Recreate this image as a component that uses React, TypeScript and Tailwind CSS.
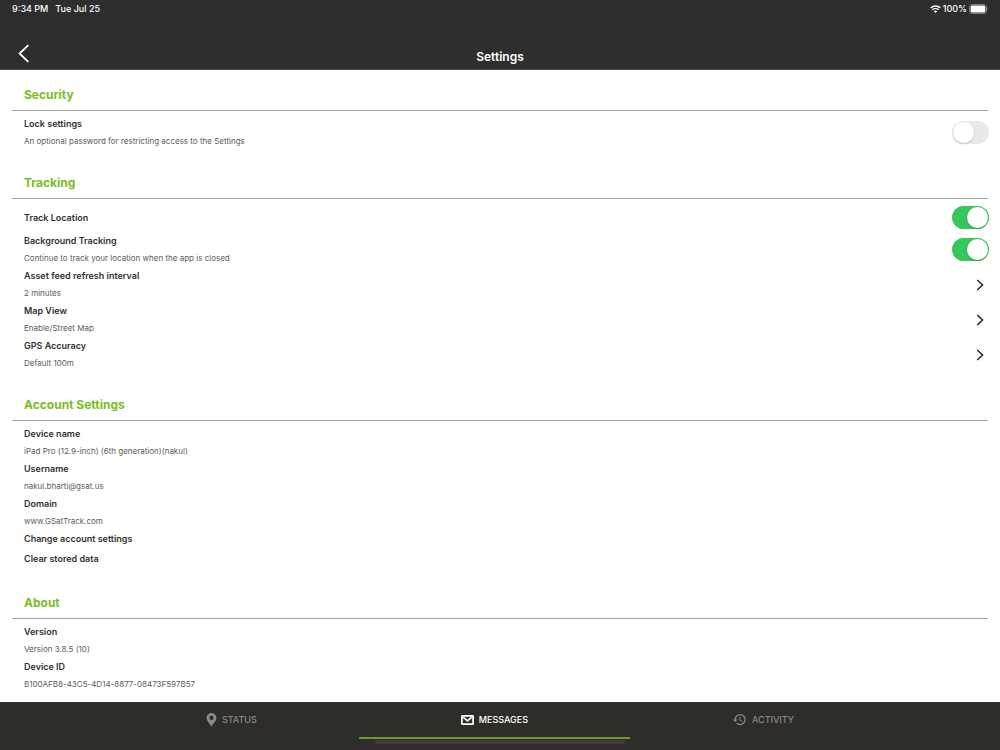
import { useState, type ReactNode } from "react";
import { FaMapMarkerAlt } from "react-icons/fa";
import { MdHistory } from "react-icons/md";

interface RowTextProps {
    title: string;
    detail?: string;
}

function RowText({ title, detail }: RowTextProps) {
    return (
        <span className="flex flex-col gap-px">
            <span className="text-[9px] leading-4 font-semibold text-[#303030]">
                {title}
            </span>
            {detail && (
                <span className="text-[8px] leading-4 text-[#5c5c5c]">
                    {detail}
                </span>
            )}
        </span>
    );
}

function InfoRow({ title, detail }: RowTextProps) {
    return (
        <div className="py-px px-6">
            <RowText title={title} detail={detail} />
        </div>
    );
}

function ActionRow({ title }: { title: string }) {
    return (
        <button className="flex w-full h-5 pt-px px-6 text-left">
            <RowText title={title} />
        </button>
    );
}

function LinkRow({ title, detail }: RowTextProps) {
    return (
        <button className="w-full flex items-center justify-between py-px pl-6 pr-4 text-left">
            <RowText title={title} detail={detail} />
            <svg
                width="8"
                height="12"
                viewBox="0 0 8 12"
                fill="none"
                stroke="#1c1c1c"
                strokeWidth="1.4"
                aria-hidden="true"
            >
                <path d="M1.2 1 L6.6 6 L1.2 11" />
            </svg>
        </button>
    );
}

interface ToggleRowProps extends RowTextProps {
    defaultOn?: boolean;
}

function ToggleRow({ title, detail, defaultOn = false }: ToggleRowProps) {
    const [on, setOn] = useState(defaultOn);

    return (
        <label className="flex items-center justify-between min-h-[29px] py-px pl-6 pr-[11px]">
            <RowText title={title} detail={detail} />
            <input
                type="checkbox"
                role="switch"
                checked={on}
                onChange={(e) => setOn(e.target.checked)}
                className="
          appearance-none flex items-center
          w-[37px] h-[23px] p-px rounded-full
          bg-[#e9e9eb] checked:bg-[#35c759] checked:justify-end
          before:block before:size-[21px] before:rounded-full before:bg-white
          before:shadow-[0_1px_2px_rgba(0,0,0,0.2)]
        "
            />
        </label>
    );
}

function Section({ title, children }: { title: string; children: ReactNode }) {
    return (
        <section>
            <h2 className="mx-3 px-3 pb-[5px] border-b border-[#a3a3a3] text-[12px] leading-5 font-bold text-[#78be20]">
                {title}
            </h2>
            <div className="pt-1">{children}</div>
        </section>
    );
}

function StatusBar() {
    return (
        <div className="h-[18px] flex items-center justify-between pl-3 pr-[11px] text-[9px] font-medium">
            <div className="flex gap-[7px]">
                <span>9:34 PM</span>
                <span>Tue Jul 25</span>
            </div>
            <div className="flex items-center gap-[2px]">
                <svg width="11" height="8" viewBox="0 0 11 8" fill="none" stroke="#fff" aria-hidden="true">
                    <path d="M0.7 2.9 A6.9 6.9 0 0 1 10.3 2.9" strokeWidth="1.4" />
                    <path d="M2.5 4.8 A4.3 4.3 0 0 1 8.5 4.8" strokeWidth="1.4" />
                    <path d="M5.5 8 L3.9 6.3 A2.3 2.3 0 0 1 7.1 6.3 Z" fill="#fff" stroke="none" />
                </svg>
                <span>100%</span>
                <svg width="20" height="10" viewBox="0 0 20 10" aria-hidden="true">
                    <rect x="0.5" y="0.5" width="17" height="9" rx="2.6" fill="none" stroke="#7c7c7c" />
                    <rect x="1.6" y="1.6" width="14.8" height="6.8" rx="1.5" fill="#fff" />
                    <path d="M18.7 3.5 Q20 5 18.7 6.5 Z" fill="#7c7c7c" />
                </svg>
            </div>
        </div>
    );
}

function Header() {
    return (
        <header className="bg-[#2e2e2e] text-white border-b border-[#484848]">
            <StatusBar />
            <div className="h-[51px] grid grid-cols-[1fr_auto_1fr] items-end px-4 pb-[2px]">
                <button aria-label="Back" className="justify-self-start pb-1 pl-[2px]">
                    <svg
                        width="12"
                        height="19"
                        viewBox="0 0 12 19"
                        fill="none"
                        stroke="#fff"
                        strokeWidth="1.8"
                        aria-hidden="true"
                    >
                        <path d="M10.3 1.2 L1.6 9.5 L10.3 17.8" />
                    </svg>
                </button>
                <h1 className="text-[12px] leading-5 font-semibold">Settings</h1>
            </div>
        </header>
    );
}

function MailIcon() {
    return (
        <svg width="13" height="10" viewBox="0 0 13 10" fill="none" stroke="currentColor" aria-hidden="true">
            <rect x="0.9" y="0.9" width="11.2" height="8.2" rx="0.4" strokeWidth="1.8" />
            <path d="M2.2 2.2 L6.5 5.9 L10.8 2.2" strokeWidth="1.7" />
        </svg>
    );
}

const tabs = [
    { id: "status", label: "STATUS", icon: <FaMapMarkerAlt className="w-[11px] h-[13px]" /> },
    { id: "messages", label: "MESSAGES", icon: <MailIcon /> },
    { id: "activity", label: "ACTIVITY", icon: <MdHistory size={15} /> },
];

function TabBar() {
    const [active, setActive] = useState("messages");

    return (
        <footer className="mt-auto bg-[#2f2d29] pb-[6px]">
            <nav className="flex justify-center">
                {tabs.map((tab) => (
                    <button
                        key={tab.id}
                        onClick={() => setActive(tab.id)}
                        className={`h-[37px] px-[10.2%] flex items-center gap-[5px] border-b-2 text-[9px] font-medium ${
                            active === tab.id
                                ? "border-[#6c9a2b] text-white"
                                : "border-transparent text-[#8b8a87]"
                        }`}
                    >
                        {tab.icon}
                        {tab.label}
                    </button>
                ))}
            </nav>
            {/* home indicator */}
            <div className="w-1/4 h-1 mt-px mx-auto rounded-full bg-[#403e3c]" />
        </footer>
    );
}

export default function App() {
    return (
        <div className="min-h-screen flex flex-col bg-white font-[Inter,'Liberation_Sans',sans-serif]">
            <Header />
            <main className="flex flex-col gap-[23px] pt-[15px] pb-2">
                <Section title="Security">
                    <ToggleRow
                        title="Lock settings"
                        detail="An optional password for restricting access to the Settings"
                    />
                </Section>
                <Section title="Tracking">
                    <ToggleRow title="Track Location" defaultOn />
                    <ToggleRow
                        title="Background Tracking"
                        detail="Continue to track your location when the app is closed"
                        defaultOn
                    />
                    <LinkRow title="Asset feed refresh interval" detail="2 minutes" />
                    <LinkRow title="Map View" detail="Enable/Street Map" />
                    <LinkRow title="GPS Accuracy" detail="Default 100m" />
                </Section>
                <Section title="Account Settings">
                    <InfoRow title="Device name" detail="iPad Pro (12.9-inch) (6th generation)(nakul)" />
                    <InfoRow title="Username" detail="nakul.bharti@gsat.us" />
                    <InfoRow title="Domain" detail="www.GSatTrack.com" />
                    <ActionRow title="Change account settings" />
                    <ActionRow title="Clear stored data" />
                </Section>
                <Section title="About">
                    <InfoRow title="Version" detail="Version 3.8.5 (10)" />
                    <InfoRow title="Device ID" detail="B100AFB8-43C5-4D14-8877-08473F597B57" />
                </Section>
            </main>
            <TabBar />
        </div>
    );
}
